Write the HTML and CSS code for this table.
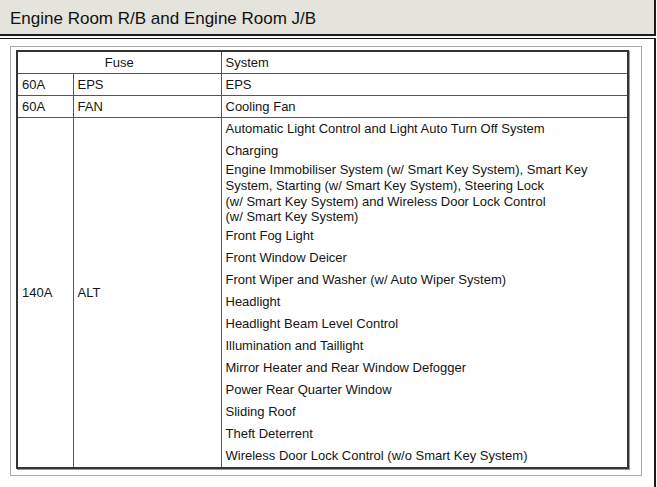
FILE: index.html
```html
<!DOCTYPE html>
<html>
<head>
<meta charset="utf-8">
<link rel="stylesheet" href="styles.css">
</head>
<body>
<div class="title">Engine Room R/B and Engine Room J/B</div>
<div class="panel">
  <div class="frame">
    <table class="fuse">
      <colgroup>
        <col class="c1"><col class="c2"><col class="c3">
      </colgroup>
      <tr class="row">
        <td colspan="2" class="center">Fuse</td>
        <td>System</td>
      </tr>
      <tr class="row">
        <td>60A</td><td>EPS</td><td>EPS</td>
      </tr>
      <tr class="row">
        <td>60A</td><td>FAN</td><td>Cooling Fan</td>
      </tr>
      <tr>
        <td>140A</td><td>ALT</td>
        <td class="list">
          <div class="item">Automatic Light Control and Light Auto Turn Off System</div>
          <div class="item">Charging</div>
          <div class="item multi">Engine Immobiliser System (w/ Smart Key System), Smart Key<br>System, Starting (w/ Smart Key System), Steering Lock<br>(w/ Smart Key System) and Wireless Door Lock Control<br>(w/ Smart Key System)</div>
          <div class="item">Front Fog Light</div>
          <div class="item">Front Window Deicer</div>
          <div class="item">Front Wiper and Washer (w/ Auto Wiper System)</div>
          <div class="item">Headlight</div>
          <div class="item">Headlight Beam Level Control</div>
          <div class="item">Illumination and Taillight</div>
          <div class="item">Mirror Heater and Rear Window Defogger</div>
          <div class="item">Power Rear Quarter Window</div>
          <div class="item">Sliding Roof</div>
          <div class="item">Theft Deterrent</div>
          <div class="item">Wireless Door Lock Control (w/o Smart Key System)</div>
        </td>
      </tr>
    </table>
  </div>
</div>
</body>
</html>
```

FILE: styles.css
```css
html, body {
  margin: 0;
  padding: 0;
  background: #ffffff;
  font-family: "Liberation Sans", Arial, sans-serif;
  overflow: hidden;
}

.title {
  box-sizing: border-box;
  width: 656px;
  height: 36px;
  background: #e4e4dc;
  border-right: 2px solid #1a1a1a;
  border-bottom: 2px solid #1a1a1a;
  padding-left: 10px;
  font-size: 17px;
  line-height: 37px;
  color: #111;
}

.panel {
  box-sizing: border-box;
  width: 656px;
  margin-top: 2px;
  border-top: 1px solid #1a1a1a;
  border-right: 2px solid #1a1a1a;
  padding: 7px 0 20px 10px;
}

.frame {
  box-sizing: border-box;
  width: 632px;
  border: 1px solid #aaaaaa;
  padding: 3px 14px 6px 5px;
}

.fuse {
  table-layout: fixed;
  width: 611px;
  border-collapse: collapse;
  border: 2px solid #333;
  font-size: 13px;
  color: #151515;
  box-shadow: 1px 1px 0 #999;
}

.c1 { width: 56px; }
.c2 { width: 148px; }
.c3 { width: 407px; }

.fuse td {
  border: 1px solid #555;
  padding: 0 4px;
  vertical-align: middle;
  white-space: nowrap;
}

.row td {
  height: 21px;
}

.center {
  text-align: center;
}

.item {
  height: 22px;
  line-height: 22px;
}

.item.multi {
  height: 63px;
  line-height: 15.75px;
}
```
